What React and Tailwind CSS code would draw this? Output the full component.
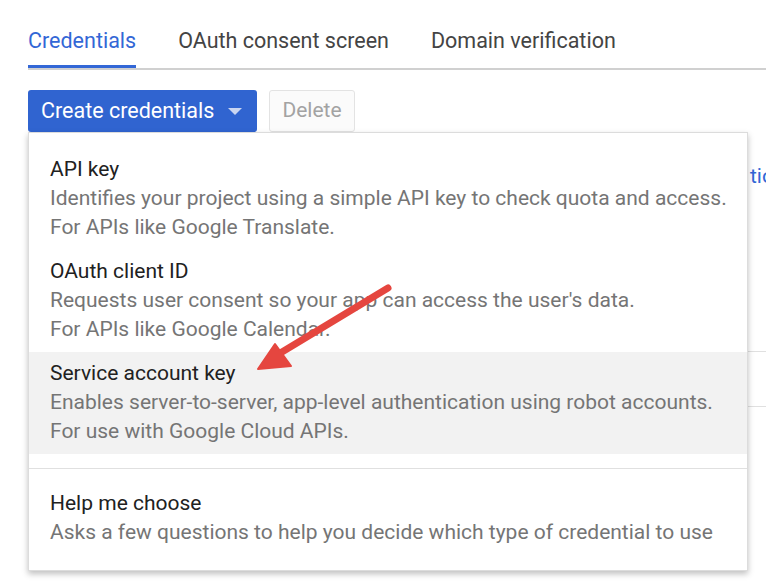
import React from "react";

const font = { fontFamily: "Roboto, 'Liberation Sans', sans-serif" };

const tabs = ["Credentials", "OAuth consent screen", "Domain verification"];

const options = [
  {
    title: "API key",
    lines: [
      "Identifies your project using a simple API key to check quota and access.",
      "For APIs like Google Translate.",
    ],
  },
  {
    title: "OAuth client ID",
    lines: [
      "Requests user consent so your app can access the user's data.",
      "For APIs like Google Calendar.",
    ],
  },
  {
    title: "Service account key",
    lines: [
      "Enables server-to-server, app-level authentication using robot accounts.",
      "For use with Google Cloud APIs.",
    ],
    hover: true,
  },
];

const MenuItem = ({ title, lines, hover }) => (
  <div
    className={`pl-[21px] pr-4 pt-[7px] pb-[8px] leading-[29px] text-[21px] ${
      hover ? "bg-[#f2f2f2]" : ""
    }`}
  >
    <div className="text-[#212121]">{title}</div>
    {lines.map((line) => (
      <div key={line} className="text-[#757575] whitespace-nowrap">
        {line}
      </div>
    ))}
  </div>
);

const App = () => {
  return (
    <div
      className="relative w-[766px] h-[582px] overflow-hidden bg-white"
      style={font}
    >
      <div className="pl-[28px] pt-[29px]">
        {/* tabs */}
        <div className="flex gap-[42px] border-b-2 border-[#d0d0d0]">
          {tabs.map((tab, i) => (
            <div key={tab} className="flex flex-col">
              <span
                className={`text-[21.5px] leading-[24px] pb-[12px] whitespace-nowrap ${
                  i === 0 ? "text-[#3367d6]" : "text-[#444444]"
                }`}
              >
                {tab}
              </span>
              <div
                className={`h-[3px] ${i === 0 ? "bg-[#3367d6]" : "bg-transparent"}`}
              />
            </div>
          ))}
        </div>

        {/* toolbar */}
        <div className="flex gap-[12px] mt-[20px]">
          <button className="flex items-center h-[42px] w-[229px] pl-[13px] rounded-[3px] bg-[#3064d0] text-white text-[21.5px] whitespace-nowrap">
            <span>Create credentials</span>
            <svg width="14" height="7" viewBox="0 0 14 7" className="ml-[14px]">
              <path d="M0 0 L14 0 L7 7 Z" fill="#c9d5f1" />
            </svg>
          </button>
          <button className="h-[42px] w-[86px] rounded-[3px] border border-[#e3e3e3] bg-[#fbfbfb] text-[#a3a3a3] text-[21px]">
            Delete
          </button>
        </div>

        {/* page content behind the menu */}
        <div className="mt-[30px] h-[29px] leading-[29px] text-[21px] pl-[722px] whitespace-nowrap text-[#3367d6]">
          tion
        </div>
        <div className="mt-[160px] border-t border-[#e0e0e0]">
          <div className="h-[55px] border-b border-[#e0e0e0]" />
          <div className="h-[108px]" />
          <div className="flex items-center gap-[20px] pl-[14px]">
            <div className="w-[21px] h-[21px] border border-[#bdbdbd]" />
            <span className="text-[21px] text-[#212121]">ID</span>
          </div>
        </div>
      </div>

      {/* dropdown menu */}
      <div className="absolute top-[132px] left-[28px] w-[720px] bg-white border border-[#dcdcdc] shadow-[0_3px_6px_rgba(0,0,0,0.25)] pt-[15px] pb-[15px]">
        {options.map((o) => (
          <MenuItem key={o.title} {...o} />
        ))}
        <div className="mt-[14px] h-px bg-[#e0e0e0]" />
        <div className="mt-[13px]">
          <MenuItem
            title="Help me choose"
            lines={[
              "Asks a few questions to help you decide which type of credential to use",
            ]}
          />
        </div>
      </div>

      {/* annotation arrow */}
      <svg
        className="absolute inset-0 pointer-events-none"
        width="766"
        height="582"
        viewBox="0 0 766 582"
      >
        <line
          x1="388"
          y1="288"
          x2="282"
          y2="352"
          stroke="#e5463f"
          strokeWidth="7"
          strokeLinecap="round"
        />
        <path d="M258 369 L275 344 L291 366 Z" fill="#e5463f" stroke="#e5463f" strokeWidth="2" strokeLinejoin="round" />
      </svg>
    </div>
  );
};

export default App;
